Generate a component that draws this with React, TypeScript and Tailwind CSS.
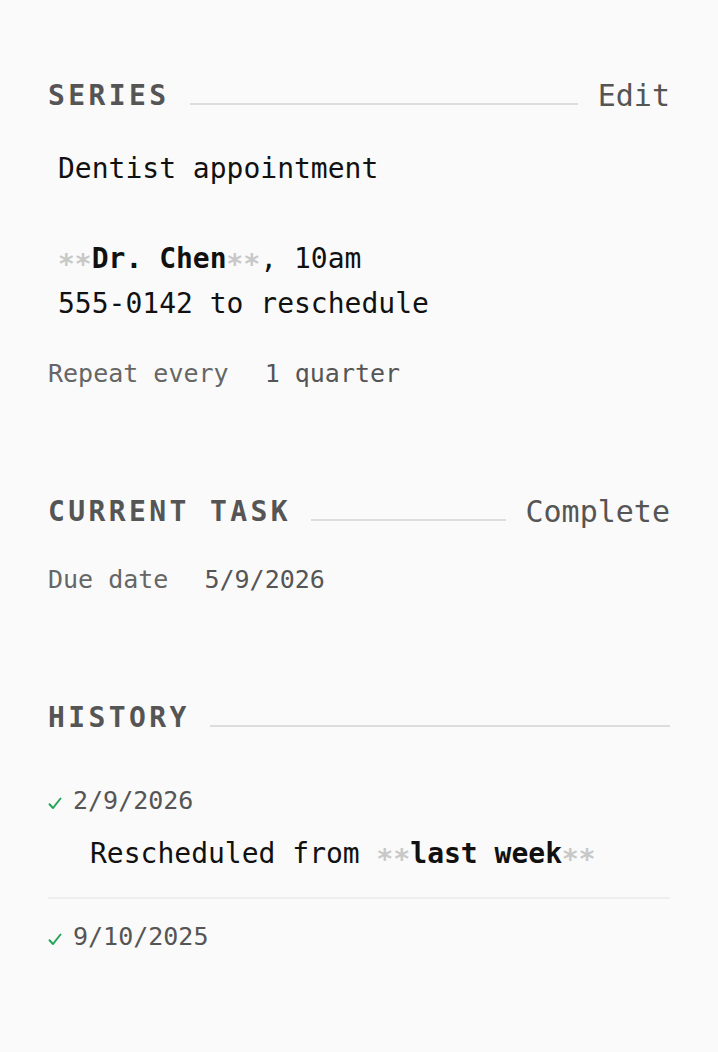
import React from "react";

const mono = "font-['DejaVu_Sans_Mono',monospace]";

function Header({ title, action }: { title: string; action?: string }) {
  return (
    <div className="flex items-center gap-5 h-10">
      <div className="text-[28px] leading-10 font-bold tracking-[3.4px] text-[#555555]">{title}</div>
      <div className="flex-1 h-[2px] bg-[#dddddd] mt-4" />
      {action && <div className="text-[30px] leading-10 text-[#555555]">{action}</div>}
    </div>
  );
}

const Ast = () => <span className="text-[#c8c8c8] font-bold">∗∗</span>;

const Check = () => (
  <svg width="14" height="14" viewBox="0 0 14 14" className="mt-[4px] shrink-0">
    <path d="M1.5 8.2 L5 12 L12.5 2.5" fill="none" stroke="#22a559" strokeWidth="2" strokeLinecap="round" strokeLinejoin="round" />
  </svg>
);

export default function App() {
  return (
    <div className={`${mono} min-h-[1052px] bg-[#fafafa] px-12 pt-[76px]`}>
      <Header title="SERIES" action="Edit" />
      <div className="mt-[30px] pl-[10px] text-[28px] leading-[45px] text-[#111111]">Dentist appointment</div>
      <div className="mt-[45px] pl-[10px] text-[28px] leading-[45px] text-[#111111]">
        <div>
          <Ast />
          <span className="font-bold">Dr. Chen</span>
          <Ast />, 10am
        </div>
        <div>555-0142 to reschedule</div>
      </div>
      <div className="mt-[30px] flex gap-[36px] text-[25px] leading-9 text-[#666666]">
        <span>Repeat every</span>
        <span className="text-[#555555]">1 quarter</span>
      </div>

      <div className="mt-[100px]">
        <Header title="CURRENT TASK" action="Complete" />
      </div>
      <div className="mt-[30px] flex gap-[36px] text-[25px] leading-9 text-[#666666]">
        <span>Due date</span>
        <span className="text-[#555555]">5/9/2026</span>
      </div>

      <div className="mt-[100px]">
        <Header title="HISTORY" />
      </div>
      <div className="mt-[45px] flex items-center gap-[11px] text-[25px] leading-9 text-[#555555]">
        <Check />
        <span>2/9/2026</span>
      </div>
      <div className="mt-[12px] pl-[42px] text-[28px] leading-[45px] text-[#111111]">
        Rescheduled from <Ast />
        <span className="font-bold">last week</span>
        <Ast />
      </div>
      <div className="mt-[21px] h-[2px] bg-[#eeeeee]" />
      <div className="mt-[20px] flex items-center gap-[11px] text-[25px] leading-9 text-[#555555]">
        <Check />
        <span>9/10/2025</span>
      </div>
    </div>
  );
}
